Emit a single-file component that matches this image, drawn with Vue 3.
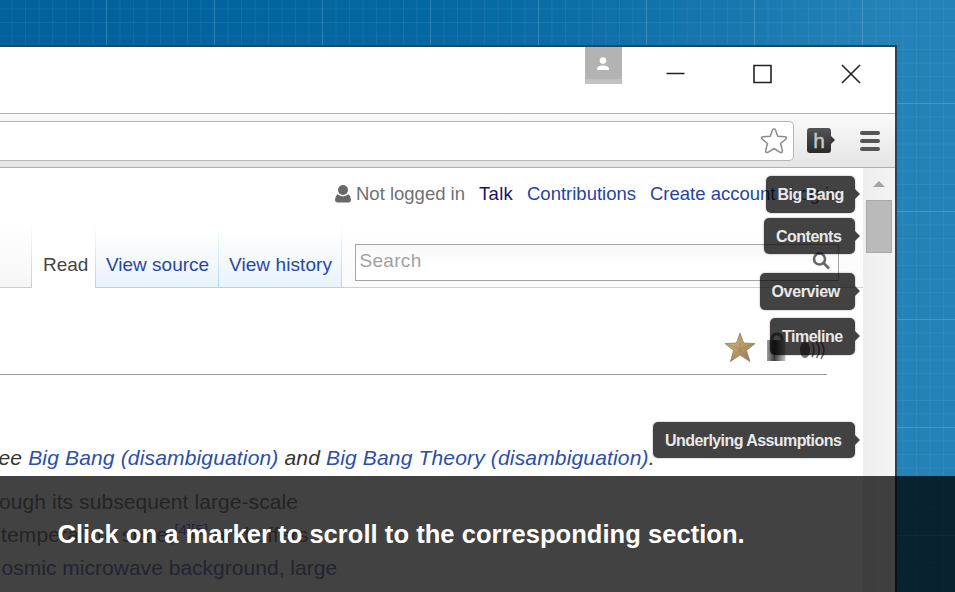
<script setup>
const markers = [
  { label: 'Big Bang', top: 176, width: 89, spacing: -0.5 },
  { label: 'Contents', top: 217.5, width: 90.5, spacing: -0.5 },
  { label: 'Overview', top: 273, width: 95, spacing: -0.35 },
  { label: 'Timeline', top: 318, width: 84.5, spacing: -0.5 },
  { label: 'Underlying Assumptions', top: 421.5, width: 201.5, spacing: -0.57 }
]
</script>

<template>
  <div class="scene">
    <div class="window">
      <header class="titlebar">
        <div class="avatar">
          <svg width="14" height="14" viewBox="0 0 14 14"><circle cx="7" cy="3.6" r="3.3" /><path d="M1 13V11.2Q2 8.500 7 8.500T13 11.2V13Z" /></svg>
        </div>
        <svg class="controls" width="190" height="22" viewBox="0 0 190 22">
          <path d="M0.500 11.500H18.500M88 3.500H105V20.500H88Z" />
          <path d="M176 3L194 21M194 3L176 21" />
        </svg>
      </header>
      <div class="toolbar">
        <div class="address">
          <svg width="28" height="28" viewBox="0 0 28 28"><path d="M14 1.800 Q15 1.800 15.500 3L17.800 9.200L25 9.700Q27.600 10.200 25.700 12.200L20.600 16.500L22.400 23.800Q22.500 26.300 20 25.300L14 21.500L8 25.300Q5.500 26.300 5.600 23.800L7.400 16.500L2.300 12.200Q.4 10.200 3 9.700L10.200 9.200L12.500 3Q13 1.800 14 1.800Z" /></svg>
        </div>
        <div class="extension">h</div>
        <div class="menu"><i></i><i></i><i></i></div>
      </div>
      <div class="viewport">
        <main class="page">
          <nav class="personal">
            <svg width="16" height="18" viewBox="0 0 16 18"><circle cx="8" cy="5" r="5" /><path d="M2.500 9.300Q8 13.500 13.500 9.300Q16 11 16 14.500Q16 17.500 13.500 17.500H2.500Q0 17.500 0 14.500Q0 11 2.500 9.300Z" /></svg>
            <span class="status">Not logged in</span>
            <a class="talk">Talk</a>
            <a class="contrib">Contributions</a>
            <a class="create">Create account</a>
            <a class="login">Log in</a>
          </nav>
          <div class="tabs">
            <div class="tab blank"></div>
            <div class="tab current">Read</div>
            <div class="tab source">View source</div>
            <div class="tab history">View history</div>
            <div class="searcharea">
              <div class="search">
                <span>Search</span>
                <svg width="18" height="18" viewBox="0 0 18 18"><circle cx="7.500" cy="7" r="5.500" /><path d="M11.500 11L17 16.500" /></svg>
              </div>
            </div>
          </div>
          <div class="heading">
            <svg width="104" height="34" viewBox="0 0 104 34">
              <defs>
                <linearGradient id="gold" x2="1" y2="1"><stop stop-color="#d7c08a" /><stop offset=".5" stop-color="#b99c65" /><stop offset="1" stop-color="#8d7960" /></linearGradient>
                <linearGradient id="lock" x2="1"><stop stop-color="#a0a0a0" /><stop offset=".4" stop-color="#3c3c3c" /><stop offset="1" stop-color="#c8c8c8" /></linearGradient>
              </defs>
              <path d="M15 2L18.700 12L30 12.500L21.500 19.500L25 30.500L15 24L5.500 30.500L8.500 19.500L0 12.500L11.400 12Z" fill="url(#gold)" stroke="#85765c" stroke-width=".7" />
              <path d="M15 3V24M0 12.500L15 18L30 12.500M5.500 30.500L15 18L25 30.500" fill="none" stroke="#9c8359" stroke-width=".6" />
              <path d="M47 12V8Q47 3 52 3T57 8V12" fill="none" stroke="#777" stroke-width="3" />
              <path d="M42 9H60.500V30H42Z" fill="url(#lock)" />
              <ellipse cx="80" cy="19" rx="5" ry="8" fill="#777" />
              <path d="M87 12Q91 19 87 26M91.500 11Q97 19 91.500 27M96 11Q102 19 96 28" fill="none" stroke="#777" stroke-width="1.600" />
            </svg>
          </div>
          <p class="hatnote"><span class="prefix">ee </span><a>Big Bang (disambiguation)</a> and <a>Big Bang Theory (disambiguation)</a>.</p>
          <div class="body">
            <p class="line1">ough its subsequent large-scale</p>
            <p class="line2">temperature state,<sup>[4][5]</sup> and offers</p>
            <p class="line3">osmic microwave background, large</p>
          </div>
        </main>
        <aside class="scrollbar"><div class="up"></div><div class="thumb"></div></aside>
      </div>
    </div>
    <div v-for="m in markers" :key="m.label" class="marker" :style="{ top: m.top + 'px', width: m.width + 'px', letterSpacing: m.spacing + 'px' }">{{ m.label }}</div>
    <div class="caption">Click on a marker to scroll to the corresponding section.</div>
  </div>
</template>

<style>
body { overflow: hidden; }
</style>

<style scoped>
* { box-sizing: border-box; }
p { margin: 0; }
svg { display: block; flex: none; }
.scene {
  position: relative;
  width: 955px;
  height: 592px;
  padding-top: 45px;
  overflow: hidden;
  font-family: "Liberation Sans", Arial, sans-serif;
  white-space: nowrap;
  background:
    linear-gradient(90deg, rgba(150,210,240,.2) 0 1px, transparent 1px) 106px 0 / 108px 100%,
    linear-gradient(rgba(150,210,240,.22) 0 1px, transparent 1px) 0 103px / 100% 108px,
    linear-gradient(90deg, rgba(150,210,240,.09) 0 1px, transparent 1px) 11.5px 0 / 13.5px 100%,
    linear-gradient(rgba(150,210,240,.09) 0 1px, transparent 1px) 0 8.5px / 100% 13.5px,
    linear-gradient(90deg, #02609b 0, #0567a1 45%, #1676ad 75%, #2482b7 92%);
}
.window {
  width: 897px;
  height: 547px;
  border: solid #254359;
  border-width: 2px 2px 0 0;
  background: #fff;
}
.titlebar { height: 66px; display: flex; padding-left: 585px; }
.avatar { width: 37px; height: 37px; background: #b3b3b3; border-bottom: 5px solid #c2c2c2; padding: 10px 0 0 11px; fill: #fff; }
.controls { margin: 15px 0 0 44px; overflow: visible; fill: none; stroke: #222; stroke-width: 1.6; }
.toolbar {
  height: 55px;
  display: flex;
  border-top: 1px solid #b0b0b0;
  border-bottom: 1px solid #b0b0b0;
  background: linear-gradient(#fafafa, #e5e5e5);
}
.address { width: 794px; height: 40px; margin-top: 7px; border: 1.5px solid #b5b5b5; border-left: 0; border-radius: 0 5px 5px 0; background: #fff; padding: 5px 0 0 760px; }
.address svg { fill: #fff; stroke: #8b8b8b; stroke-width: 1.5; }
.extension { position: relative; width: 24px; height: 25px; margin: 14px 0 0 13px; border-radius: 3px; background: linear-gradient(#555, #292929); color: #c8c8c8; font-size: 21px; line-height: 25px; text-align: center; -webkit-text-stroke: .4px #c8c8c8; }
.extension::after { content: ""; position: absolute; left: 24px; top: 8px; border: solid transparent; border-width: 4.500px 0 4.500px 4px; border-left-color: #333; }
.menu { margin: 17px 0 0 29px; display: flex; flex-direction: column; gap: 4px; }
.menu i { width: 20px; height: 4px; border-radius: 2px; background: #565656; }
.viewport { height: 424px; display: flex; }
.page { width: 863px; height: 424px; overflow: hidden; }
.personal { height: 56px; display: flex; padding: 15px 0 0 335px; font-size: 18.5px; line-height: 22px; color: #2643a2; }
.personal svg { margin-top: 2px; fill: #696969; }
.status { width: 123px; margin-left: 5px; color: #707070; }
.talk { width: 48px; color: #221069; letter-spacing: .3px; }
.contrib { width: 123px; }
.create { width: 139px; }
.login { color: #5468b0; }
.tabs { height: 64px; display: flex; font-size: 19px; color: #2946a4; }
.tab { height: 64px; padding-top: 30px; line-height: 22px; border-bottom: 1.5px solid #b3daec; border-right: 1px solid; border-image: linear-gradient(#fff, #afd5e8) 1; border-left: 0; border-top: 0; background: linear-gradient(#fff 10%, #e8f3fa); }
.blank { width: 32px; background: linear-gradient(#fff, #f6f6f6); }
.current { width: 64px; padding-left: 11px; border-bottom: 0; background: #fff; color: #454545; }
.source { width: 123px; padding-left: 10px; }
.history { width: 123px; padding-left: 10px; letter-spacing: .08px; }
.searcharea { flex: 1; border-bottom: 1px solid #b3daec; padding: 20px 0 0 12.5px; background: linear-gradient(#fff, #fafafa); }
.search { width: 484px; height: 37px; display: flex; justify-content: space-between; padding: 5px 8px 0 4px; border: 1.5px solid #a5a5a5; background: linear-gradient(#f7f7f7, #fff 55%); color: #a1a1a1; line-height: 22px; letter-spacing: .3px; }
.search svg { margin-top: 2px; fill: none; stroke: #666; stroke-width: 2.600; }
.heading { width: 827px; height: 87px; border-bottom: 1px solid #999; padding: 43px 0 0 725px; }
.heading svg { overflow: visible; }
.hatnote { height: 101px; padding-top: 71px; line-height: 24px; font-size: 21px; font-style: italic; letter-spacing: .16px; color: #333; }
.hatnote a { color: #2a4ea9; }
.prefix { margin-left: -1.500px; }
.body { font-size: 21px; line-height: 33px; padding-top: 9px; color: #8a8a8a; }
.line1 { margin-left: -1px; letter-spacing: .08px; }
.line2 { margin-left: 1px; letter-spacing: .15px; }
.line3 { margin-left: 1.500px; letter-spacing: .02px; color: #868db8; }
sup { font-size: 15.500px; line-height: 0; letter-spacing: -.1px; vertical-align: 7px; color: #868db8; }
.scrollbar { width: 32px; background: linear-gradient(90deg, #eee, #f4f4f4); padding: 13px 0 0 3px; }
.up { width: 0; margin-left: 7px; border: solid transparent; border-width: 0 6px 6px; border-bottom-color: #a5a5a5; }
.thumb { width: 26px; height: 53px; margin-top: 13px; background: #bababa; border: 1px solid #a9a9a9; }
.marker { position: absolute; right: 100.500px; height: 36.500px; border-radius: 5px; padding-left: 12px; background: rgba(0,0,0,.74); box-shadow: 0 0 2px rgba(0,0,0,.4); color: #e9e9e9; font-size: 16px; font-weight: 700; line-height: 37px; }
.marker::after { content: ""; position: absolute; left: 100%; top: 13px; border: solid transparent; border-width: 5.500px 0 5.500px 5px; border-left-color: #424242; }
.caption { position: absolute; left: 0; right: 0; bottom: 0; height: 116px; background: rgba(0,0,0,.74); color: #fff; font-size: 25.500px; font-weight: 700; line-height: 30px; letter-spacing: .05px; padding: 43px 0 0 57.500px; }
</style>
